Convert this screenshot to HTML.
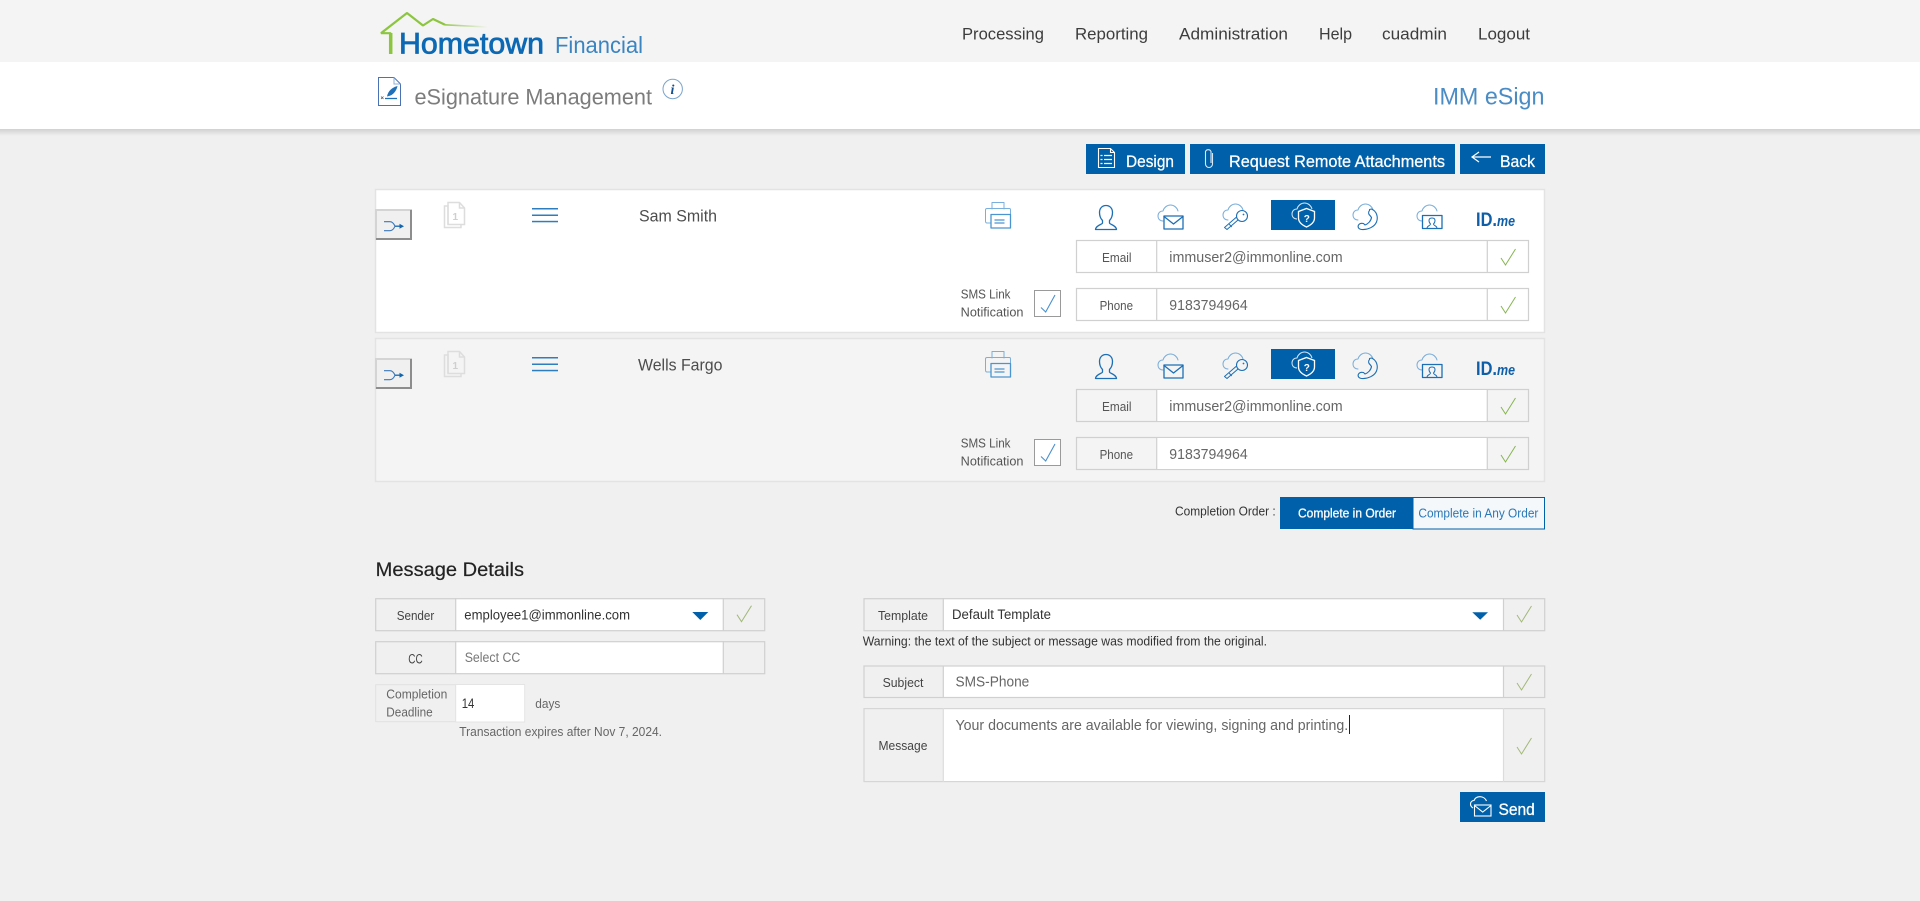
<!DOCTYPE html>
<html lang="en">
<head>
<meta charset="utf-8">
<title>eSignature Management</title>
<style>
html,body{margin:0;padding:0;width:1920px;height:901px;overflow:hidden;background:#f0f0f0}
svg{display:block}
text{font-family:"Liberation Sans",Arial,sans-serif}
</style>
</head>
<body>
<svg xmlns="http://www.w3.org/2000/svg" width="1920" height="901" viewBox="0 0 1920 901">
<defs>
<linearGradient id="shadow" x1="0" y1="0" x2="0" y2="1"><stop offset="0" stop-color="#000" stop-opacity=".13"/><stop offset="1" stop-color="#000" stop-opacity="0"/></linearGradient>
<linearGradient id="roof" gradientUnits="userSpaceOnUse" x1="440" y1="0" x2="488" y2="0"><stop offset="0" stop-color="#8cc63f"/><stop offset="1" stop-color="#8cc63f" stop-opacity="0"/></linearGradient>
<path id="cloud" d="M5 16C2 16 0 14 0 11C0 8 2 6 5 6C6 2.500 9 0 12.500 0C16 0 19 2.500 20 6" fill="none" stroke-width="1"/>
<g id="authIcons">
  <g fill="none" stroke="#2a7dbf" stroke-width="1.300" stroke-linejoin="round" stroke-linecap="round">
    <g transform="translate(985,202)">
      <path d="M7 7V.5H19V7M6 21H2Q.5 21 .5 19V8Q.5 6.500 2 6.500H24.500Q25.500 6.500 25.500 8V12" stroke="#78afdd" stroke-width="1"/>
      <rect x="6" y="12.500" width="19.500" height="13.500" fill="#fff" fill-opacity="0" stroke="#4a94d0" stroke-width="1.300"/>
      <path d="M10 18H19M10 21H19" stroke="#4a94d0"/>
    </g>
    <path d="M1106 205.500c-4 0-6.500 3-6.500 7 0 3.500 1.500 6.500 3 8v2.500c0 1.500-6.500 2-7 6.500h21c-.5-4.500-7-5-7-6.500v-2.500c1.500-1.500 3-4.500 3-8 0-4-2.500-7-6.500-7z" stroke="#1c6fb5"/>
    <use href="#cloud" x="1158" y="205" stroke="#7aaeda"/>
    <rect x="1164" y="216" width="19" height="13" stroke="#1c6fb5"/>
    <path d="M1164 216.500L1173.500 224L1183 216.500" stroke="#1c6fb5"/>
    <use href="#cloud" x="1223" y="204" stroke="#7aaeda"/>
    <circle cx="1242" cy="216" r="5.500" stroke="#1c6fb5" stroke-width="1.100"/>
    <circle cx="1243.500" cy="214.500" r=".5" stroke="#1c6fb5" stroke-width=".8"/>
    <path d="M1238 220L1227 229.500L1224.500 227.500L1236 217.500M1229.500 224.500L1231.500 226.700" stroke="#1c6fb5" stroke-width="1"/>
    <use href="#cloud" x="1353" y="204" stroke="#7aaeda"/>
    <path d="M1369.500 209.500l2-.5c5 2 7 8 5 13-2 5-9 8-15 7.500-3-.3-4-2.500-3-4.500 1-1.500 3-2 5-1.500l1.500 1.500c3-1 6-4 6.500-7.500l-1.500-2c-1.500-1-2-3.500-.5-5z" stroke="#1c6fb5" stroke-width="1.100"/>
    <use href="#cloud" x="1417" y="205" stroke="#7aaeda"/>
    <rect x="1422.500" y="215.500" width="19.500" height="13" stroke="#1c6fb5"/>
    <path d="M1427 228.500c0-3 3.500-2.500 3.500-4.500-1-1-1.500-2-1.500-3.500 0-1.500 1-2.500 3-2.500s3 1 3 2.500c0 1.500-.5 2.500-1.500 3.500 0 2 3.500 1.500 3.500 4.500" stroke="#1c6fb5" stroke-width="1"/>
  </g>
  <rect x="1271" y="200" width="64" height="30" fill="#0060a9"/>
  <use href="#cloud" x="1292" y="203" stroke="#d5e6f5" fill="none"/>
  <path d="M1306.500 208.500l8 3v6.500c0 4-3.500 7-8 9-4.500-2-8-5-8-9v-6.500z" fill="#0060a9" stroke="#fff" stroke-width="1.300"/>
  <text x="1303.700" y="222" font-size="10" font-weight="700" fill="#fff">?</text>
  <text x="1476" y="226" font-size="19" font-weight="700" fill="#0f5fa8" textLength="21" lengthAdjust="spacingAndGlyphs">ID.</text>
  <text x="1497" y="226" font-size="15" font-weight="700" font-style="italic" fill="#0f5fa8" textLength="18" lengthAdjust="spacingAndGlyphs">me</text>
</g>
<g id="routeBtn">
  <rect x="376" y="210" width="36" height="30" fill="#f0f0f0"/>
  <path d="M376 240V210H412" fill="none" stroke="#d4d4d4" stroke-width="2"/>
  <path d="M376 239H411V210" fill="none" stroke="#8d8d8d" stroke-width="2"/>
  <path d="M384 221.700H390C392.500 221.700 394 224 395 226.200C394 228.500 392.500 230.700 390 230.700H384" fill="none" stroke="#3b78b8" stroke-width="1.100"/>
  <path d="M395 226.200H401" stroke="#1366ad" stroke-width="1.300"/>
  <path d="M399.500 223.700L404 226.200L399.500 228.700z" fill="#1366ad"/>
</g>
<g id="docIcon" fill="none" stroke="#dddddd" stroke-width="1.500">
  <path d="M448 224.500V206H444.500V227.500H461V224.500"/>
  <path d="M448 202.500H459.500L464.500 208V224.500H448z"/>
  <path d="M459.500 202.500V208H464.500"/>
</g>
<g id="menuIcon" fill="#2e7dbe">
  <rect x="532" y="208" width="26" height="1.500"/><rect x="532" y="214.500" width="26" height="1.500"/><rect x="532" y="220.800" width="26" height="1.500"/>
</g>
<path id="bigCheck" d="M0 9L4.500 16L14.500 0" fill="none" stroke-width="1"/>
</defs>

<!-- Header -->
<rect width="1920" height="901" fill="#f0f0f0"/>
<rect width="1920" height="62" fill="#f4f4f4"/>
<rect y="62" width="1920" height="67" fill="#fff"/>
<rect y="129" width="1920" height="7" fill="url(#shadow)"/>

<!-- Logo -->
<path d="M390.700 54V33.200H381L407 13L423 25.500L433 19L445 24.800" fill="none" stroke="#8cc63f" stroke-width="2.200" stroke-linejoin="bevel"/>
<path d="M390.700 33V54" stroke="#8cc63f" stroke-width="3.500"/>
<path d="M445 24.800L487 27" fill="none" stroke="url(#roof)" stroke-width="1.600"/>
<text x="399" y="53.300" font-size="30" fill="#0d69b3" stroke="#0d69b3" stroke-width=".8" textLength="145" lengthAdjust="spacingAndGlyphs">Hometown</text>
<text x="555" y="53" font-size="23" fill="#3a84c1" textLength="88" lengthAdjust="spacingAndGlyphs">Financial</text>

<!-- Nav -->
<g font-size="17" fill="#3d3d3d">
<text x="962" y="39.500" textLength="82" lengthAdjust="spacingAndGlyphs">Processing</text>
<text x="1075" y="39.500" textLength="73" lengthAdjust="spacingAndGlyphs">Reporting</text>
<text x="1179" y="39.500" textLength="109" lengthAdjust="spacingAndGlyphs">Administration</text>
<text x="1319" y="39.500" textLength="33" lengthAdjust="spacingAndGlyphs">Help</text>
<text x="1382" y="39.500" textLength="65" lengthAdjust="spacingAndGlyphs">cuadmin</text>
<text x="1478" y="39.500" textLength="52" lengthAdjust="spacingAndGlyphs">Logout</text>
</g>

<!-- Title bar -->
<path d="M378.500 77.500H394L400.500 84V105.500H378.500z" fill="#fff" stroke="#4a73b5" stroke-width="1"/>
<path d="M394 77.500V84H400.500" fill="none" stroke="#8fb0d8" stroke-width="1"/>
<path d="M387 96.500C388 91 392 87.500 397.500 86C396.500 91 393 95 389 96z" fill="#1e70b8"/>
<path d="M385 98.500H397" stroke="#1e70b8" stroke-width="1.300"/>
<path d="M381 96.500L383.500 99M383.500 96.500L381 99" stroke="#555" stroke-width=".7"/>
<text x="414.500" y="104.300" font-size="22" fill="#7c7c7c" textLength="237.500" lengthAdjust="spacingAndGlyphs">eSignature Management</text>
<circle cx="672.700" cy="89" r="9.700" fill="#fff" stroke="#7aa4cc" stroke-width="1"/>
<text x="670.500" y="94" font-size="14" font-weight="700" font-style="italic" fill="#134f8c" style="font-family:'Liberation Serif',serif">i</text>
<text x="1433" y="104.500" font-size="24" fill="#4a8cc5" textLength="111.500" lengthAdjust="spacingAndGlyphs">IMM eSign</text>

<!-- Action buttons -->
<rect x="1086" y="144" width="99" height="30" fill="#0060a9"/>
<rect x="1190" y="144" width="265" height="30" fill="#0060a9"/>
<rect x="1460" y="144" width="85" height="30" fill="#0060a9"/>
<g fill="none" stroke="#fff" stroke-width="1.100">
  <path d="M1098.500 148.500H1110.500L1114.500 152.500V167.500H1098.500zM1110.500 148.500V152.500H1114.500"/>
  <path d="M1104 155.500H1112M1104 159.500H1112M1104 163.500H1112M1100.500 155.500H1102.500M1100.500 159.500H1102.500M1100.500 163.500H1102.500" stroke-width="1.300"/>
  <path d="M1212.500 153V164A3.500 3.500 0 0 1 1205.500 164V151.500A3 3 0 0 1 1211 151.500V163" stroke="#d9e9f6"/>
  <path d="M1491 157H1472M1479 152L1472 157L1479 162" stroke-width="1.200"/>
</g>
<g font-size="16.500" fill="#fff" stroke="#fff" stroke-width=".25">
<text x="1126" y="167" textLength="48" lengthAdjust="spacingAndGlyphs">Design</text>
<text x="1229" y="167" textLength="216" lengthAdjust="spacingAndGlyphs">Request Remote Attachments</text>
<text x="1500" y="167" textLength="35" lengthAdjust="spacingAndGlyphs">Back</text>
</g>

<!-- Recipient 1 -->
<rect x="375.500" y="189.500" width="1169" height="143" fill="#fff" stroke="#e3e3e3" stroke-width="1.500"/>
<use href="#routeBtn"/>
<use href="#docIcon"/>
<text x="452.500" y="220" font-size="10" font-weight="700" fill="#cfcfcf">1</text>
<use href="#menuIcon"/>
<text x="639" y="221.500" font-size="17" fill="#4d4d4d" textLength="78" lengthAdjust="spacingAndGlyphs">Sam Smith</text>
<use href="#authIcons"/>
<g fill="#fff" stroke="#d0d0d0" stroke-width="1.200">
  <rect x="1076.500" y="240.500" width="452" height="32"/>
  <rect x="1076.500" y="288.500" width="452" height="32"/>
</g>
<path d="M1156.700 240V273M1487.300 240V273M1156.700 288V321M1487.300 288V321" stroke="#d0d0d0" stroke-width="1.200"/>
<g font-size="13" fill="#555">
<text x="1102" y="262" textLength="29.500" lengthAdjust="spacingAndGlyphs">Email</text>
<text x="1099.600" y="310" textLength="33.400" lengthAdjust="spacingAndGlyphs">Phone</text>
</g>
<g font-size="15" fill="#666">
<text x="1169.300" y="262" textLength="173.300" lengthAdjust="spacingAndGlyphs">immuser2@immonline.com</text>
<text x="1169.300" y="310" textLength="78.400" lengthAdjust="spacingAndGlyphs">9183794964</text>
</g>
<use href="#bigCheck" x="1501" y="249" stroke="#86b550"/>
<use href="#bigCheck" x="1501" y="297" stroke="#86b550"/>
<g font-size="12.500" fill="#555">
<text x="960.700" y="298.300" textLength="49.800" lengthAdjust="spacingAndGlyphs">SMS Link</text>
<text x="960.700" y="316.700" textLength="62.800" lengthAdjust="spacingAndGlyphs">Notification</text>
</g>
<rect x="1034.500" y="290.500" width="26" height="26" fill="#fff" stroke="#9a9a9a" stroke-width="1"/>
<path d="M1041 307.500L1045.700 312L1055 295" fill="none" stroke="#4a90d0" stroke-width="1.100"/>

<!-- Recipient 2 -->
<rect x="375.500" y="338.500" width="1169" height="143" fill="#f4f4f4" stroke="#e3e3e3" stroke-width="1.500"/>
<g transform="translate(0,149)">
<use href="#routeBtn"/>
<use href="#docIcon"/>
<text x="452.500" y="220" font-size="10" font-weight="700" fill="#cfcfcf">1</text>
<use href="#menuIcon"/>
<text x="638" y="221.500" font-size="17" fill="#4d4d4d" textLength="84.500" lengthAdjust="spacingAndGlyphs">Wells Fargo</text>
<use href="#authIcons"/>
<g fill="#f4f4f4" stroke="#d0d0d0" stroke-width="1.200">
  <rect x="1076.500" y="240.500" width="452" height="32"/>
  <rect x="1076.500" y="288.500" width="452" height="32"/>
</g>
<rect x="1157" y="241" width="330" height="31" fill="#fff"/>
<rect x="1157" y="289" width="330" height="31" fill="#fff"/>
<path d="M1156.700 240V273M1487.300 240V273M1156.700 288V321M1487.300 288V321" stroke="#d0d0d0" stroke-width="1.200"/>
<g font-size="13" fill="#555">
<text x="1102" y="262" textLength="29.500" lengthAdjust="spacingAndGlyphs">Email</text>
<text x="1099.600" y="310" textLength="33.400" lengthAdjust="spacingAndGlyphs">Phone</text>
</g>
<g font-size="15" fill="#666">
<text x="1169.300" y="262" textLength="173.300" lengthAdjust="spacingAndGlyphs">immuser2@immonline.com</text>
<text x="1169.300" y="310" textLength="78.400" lengthAdjust="spacingAndGlyphs">9183794964</text>
</g>
<use href="#bigCheck" x="1501" y="249" stroke="#86b550"/>
<use href="#bigCheck" x="1501" y="297" stroke="#86b550"/>
<g font-size="12.500" fill="#555">
<text x="960.700" y="298.300" textLength="49.800" lengthAdjust="spacingAndGlyphs">SMS Link</text>
<text x="960.700" y="316.700" textLength="62.800" lengthAdjust="spacingAndGlyphs">Notification</text>
</g>
<rect x="1034.500" y="290.500" width="26" height="26" fill="#fff" stroke="#9a9a9a" stroke-width="1"/>
<path d="M1041 307.500L1045.700 312L1055 295" fill="none" stroke="#4a90d0" stroke-width="1.100"/>
</g>

<!-- Completion order -->
<text x="1175" y="515.700" font-size="13" fill="#333" textLength="100.700" lengthAdjust="spacingAndGlyphs">Completion Order :</text>
<rect x="1413" y="497.500" width="131.500" height="31.500" fill="#f5f8fb" stroke="#0060a9" stroke-width="1"/>
<rect x="1280" y="497" width="133" height="32" fill="#0060a9"/>
<text x="1298" y="517.700" font-size="13" fill="#fff" stroke="#fff" stroke-width=".3" textLength="98" lengthAdjust="spacingAndGlyphs">Complete in Order</text>
<text x="1418.400" y="517.700" font-size="13" fill="#2a78b8" textLength="120" lengthAdjust="spacingAndGlyphs">Complete in Any Order</text>

<!-- Message details: left -->
<text x="375.700" y="576" font-size="19.500" fill="#222" stroke="#222" stroke-width=".2" textLength="148.300" lengthAdjust="spacingAndGlyphs">Message Details</text>

<rect x="455.700" y="598.500" width="267.600" height="32" fill="#fff"/>
<rect x="375.700" y="598.700" width="389" height="32" fill="none" stroke="#d0d0d0" stroke-width="1.200"/>
<path d="M455.700 598V631M723.300 598V631" stroke="#d0d0d0" stroke-width="1.200"/>
<text x="396.700" y="620" font-size="13" fill="#444" textLength="37.600" lengthAdjust="spacingAndGlyphs">Sender</text>
<text x="464.300" y="619.300" font-size="14" fill="#333" textLength="165.700" lengthAdjust="spacingAndGlyphs">employee1@immonline.com</text>
<path d="M692.300 612H708.300L700.300 620z" fill="#0060a9"/>
<use href="#bigCheck" x="737" y="605.700" stroke="#a3b97c"/>

<rect x="455.700" y="641.500" width="267.600" height="32" fill="#fff"/>
<rect x="375.700" y="641.700" width="389" height="32" fill="none" stroke="#d0d0d0" stroke-width="1.200"/>
<path d="M455.700 641V674M723.300 641V674" stroke="#d0d0d0" stroke-width="1.200"/>
<text x="408.300" y="663.300" font-size="13.500" fill="#444" textLength="14.400" lengthAdjust="spacingAndGlyphs">CC</text>
<text x="464.700" y="662" font-size="13.500" fill="#777" textLength="55.600" lengthAdjust="spacingAndGlyphs">Select CC</text>

<rect x="375.700" y="684.700" width="80" height="37" fill="none" stroke="#e2e2e2" stroke-width="1"/>
<rect x="455.700" y="684.500" width="69" height="37.500" fill="#fff" stroke="#e4e4e4" stroke-width="1"/>
<g font-size="13" fill="#666">
<text x="386.300" y="698.700" textLength="61" lengthAdjust="spacingAndGlyphs">Completion</text>
<text x="386.300" y="716.700" textLength="46.400" lengthAdjust="spacingAndGlyphs">Deadline</text>
<text x="535.300" y="708" textLength="25" lengthAdjust="spacingAndGlyphs">days</text>
<text x="459.300" y="736" textLength="202.700" lengthAdjust="spacingAndGlyphs">Transaction expires after Nov 7, 2024.</text>
</g>
<text x="461.700" y="708" font-size="13.500" fill="#333" textLength="12.600" lengthAdjust="spacingAndGlyphs">14</text>

<!-- Message details: right -->
<rect x="943.300" y="598.500" width="560.200" height="32" fill="#fff"/>
<rect x="864" y="598.700" width="680.700" height="32" fill="none" stroke="#d0d0d0" stroke-width="1.200"/>
<path d="M943.300 598V631M1503.500 598V631" stroke="#d0d0d0" stroke-width="1.200"/>
<text x="878" y="620" font-size="13" fill="#444" textLength="50" lengthAdjust="spacingAndGlyphs">Template</text>
<text x="952" y="619" font-size="13.500" fill="#333" textLength="99" lengthAdjust="spacingAndGlyphs">Default Template</text>
<path d="M1472.300 612.300H1488L1480.200 619.800z" fill="#0060a9"/>
<use href="#bigCheck" x="1517" y="606" stroke="#a3b97c"/>
<text x="862.700" y="645.700" font-size="12.500" fill="#333" textLength="404.300" lengthAdjust="spacingAndGlyphs">Warning: the text of the subject or message was modified from the original.</text>

<rect x="943.300" y="666" width="560.200" height="31.500" fill="#fff"/>
<rect x="864" y="666" width="680.700" height="31.500" fill="none" stroke="#d0d0d0" stroke-width="1.200"/>
<path d="M943.300 665.500V698M1503.500 665.500V698" stroke="#d0d0d0" stroke-width="1.200"/>
<text x="882.600" y="687" font-size="13" fill="#444" textLength="40.800" lengthAdjust="spacingAndGlyphs">Subject</text>
<text x="955.500" y="686.700" font-size="14.500" fill="#666" textLength="73.800" lengthAdjust="spacingAndGlyphs">SMS-Phone</text>
<use href="#bigCheck" x="1517" y="674" stroke="#a3b97c"/>

<rect x="943.300" y="708.500" width="560.200" height="73" fill="#fff"/>
<rect x="864" y="708.600" width="680.700" height="73" fill="none" stroke="#d6d6d6" stroke-width="1.200"/>
<path d="M943.300 708V782M1503.500 708V782" stroke="#dcdcdc" stroke-width="1.200"/>
<text x="878.500" y="750" font-size="13" fill="#444" textLength="48.900" lengthAdjust="spacingAndGlyphs">Message</text>
<text x="955.500" y="730" font-size="14.500" fill="#666" textLength="392.700" lengthAdjust="spacingAndGlyphs">Your documents are available for viewing, signing and printing.</text>
<path d="M1349.500 715V734" stroke="#222" stroke-width="1"/>
<use href="#bigCheck" x="1517" y="738" stroke="#a3b97c"/>

<!-- Send -->
<rect x="1460" y="792" width="85" height="30" fill="#0060a9"/>
<g fill="none" stroke="#fff" stroke-width="1.100">
  <path d="M1473 808C1471.500 807 1470.500 805.500 1470.500 804C1470.500 802 1472 800.500 1474 800.500C1475 798 1477.500 796.700 1480 796.700C1483 796.700 1485.500 798.500 1486.500 801"/>
  <rect x="1474.500" y="805" width="16.500" height="11" fill="#0060a9"/>
  <path d="M1474.500 805.500L1482.700 812L1491 805.500"/>
</g>
<text x="1498.500" y="815" font-size="17" fill="#fff" stroke="#fff" stroke-width=".3" textLength="36.300" lengthAdjust="spacingAndGlyphs">Send</text>
</svg>
</body>
</html>
